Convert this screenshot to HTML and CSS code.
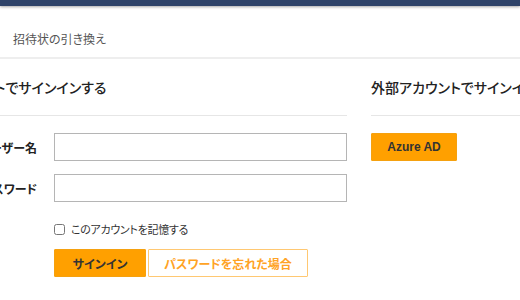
FILE: index.html
```html
<!DOCTYPE html>
<html lang="ja">

<head>
	<meta charset="UTF-8">
	<title>サインイン</title>
	<link rel="stylesheet" href="styles.css">
</head>

<body>
	<div class="topbar"></div>
	<div class="subnav">
		<a class="subnav-link" href="javascript:void(0)">招待状の引き換え</a>
	</div>
	<div class="main">
		<section class="local">
			<h2 class="section-title">ローカル アカウントでサインインする</h2>
			<form class="form">
				<div class="field">
					<label class="field-label">ユーザー名</label>
					<input class="field-input" type="text">
				</div>
				<div class="field">
					<label class="field-label">パスワード</label>
					<input class="field-input" type="password">
				</div>
				<div class="remember">
					<input class="remember-check" type="checkbox" id="remember">
					<label for="remember">このアカウントを記憶する</label>
				</div>
				<div class="actions">
					<button class="btn btn-primary" type="button">サインイン</button>
					<button class="btn btn-outline" type="button">パスワードを忘れた場合</button>
				</div>
			</form>
		</section>
		<section class="external">
			<h2 class="section-title">外部アカウントでサインインする</h2>
			<div class="providers">
				<button class="btn btn-primary btn-azure" type="button">Azure AD</button>
			</div>
		</section>
	</div>
</body>

</html>
```

FILE: styles.css
```css
* {
	margin: 0;
	padding: 0;
	box-sizing: border-box;
}

html,
body {
	height: 100%;
	overflow: hidden;
}

body {
	background: #fff;
	color: #222;
	font-family: "Noto Sans CJK JP", "Liberation Sans", sans-serif;
	font-feature-settings: "palt";
	font-size: 12px;
}

a {
	text-decoration: none;
}

.topbar {
	height: 6px;
	background: #2e4369;
	box-shadow: 0 1px 3px rgba(0, 0, 0, .35);
	position: relative;
}

.subnav {
	padding: 24px 13px 9px;
	line-height: 18px;
	border-bottom: 2px solid #eeeeee;
}

.subnav-link {
	color: #555;
	font-size: 12px;
}

/* the page is wider than the window: the left column starts off screen */
.main {
	display: flex;
	gap: 24px;
	margin-left: -113px;
	white-space: nowrap;
}

.local {
	flex: 0 0 460px;
}

.external {
	flex: 0 0 300px;
}

.section-title {
	font-size: 14px;
	font-weight: 500;
	line-height: 20px;
	color: #222;
	padding: 18px 0;
	border-bottom: 1px solid #e6e6e6;
}

.form {
	display: flex;
	flex-direction: column;
	padding-top: 17px;
}

.field {
	display: flex;
	align-items: center;
	gap: 17px;
	margin-bottom: 13px;
}

.field-label {
	width: 150px;
	text-align: right;
	font-weight: 700;
	font-size: 12px;
	color: #222;
}

.field-input {
	width: 293px;
	height: 28px;
	border: 1px solid #b5b5b5;
	background: #fff;
	outline: none;
}

.remember,
.actions {
	margin-left: 167px;
}

.remember {
	display: flex;
	align-items: center;
	gap: 6px;
	line-height: 18px;
	margin-top: 5px;
	font-size: 11px;
	letter-spacing: -0.3px;
	color: #333;
}

.remember-check {
	width: 11px;
	height: 11px;
	margin: 0;
}

.actions {
	display: flex;
	gap: 2px;
	margin-top: 11px;
}

.btn {
	height: 28px;
	font-family: inherit;
	font-feature-settings: "palt";
	font-size: 12px;
	font-weight: 700;
	border-radius: 1px;
	cursor: pointer;
}

.btn-primary {
	width: 92px;
	background: #ffa000;
	border: 1px solid #f5a10f;
	color: #333;
}

.btn-outline {
	width: 160px;
	background: #fff;
	border: 1px solid #ffc872;
	color: #ffa325;
}

.providers {
	padding-top: 17px;
}

.btn-azure {
	width: 86px;
	font-family: "Liberation Sans", sans-serif;
}
```
